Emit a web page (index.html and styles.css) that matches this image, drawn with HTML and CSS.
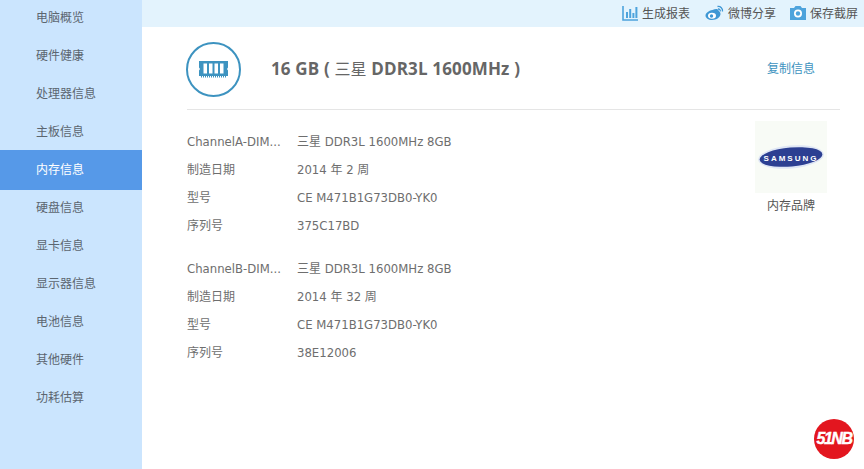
FILE: index.html
```html
<!doctype html>
<html>
  <head>
    <meta charset="utf-8">
    <title>内存信息</title>
    <link rel="stylesheet" href="styles.css">
  </head>
  <body>
    <div class="app">
      <ul class="side">
        <li>电脑概览</li>
        <li>硬件健康</li>
        <li>处理器信息</li>
        <li>主板信息</li>
        <li class="active">内存信息</li>
        <li>硬盘信息</li>
        <li>显卡信息</li>
        <li>显示器信息</li>
        <li>电池信息</li>
        <li>其他硬件</li>
        <li>功耗估算</li>
      </ul>

      <div class="main">
        <div class="top">
          <span class="tool">
            <svg width="16" height="16" viewBox="0 0 16 16"><path d="M1 1v14h15" fill="none" stroke="#4da3dc" stroke-width="1.6"/><path d="M4 7h2v6H4zM7.200 4h2v9h-2zM10.400 8h2v5h-2zM13.400 2h2v11h-2z" fill="#4da3dc"/></svg>
            生成报表
          </span>
          <span class="tool">
            <svg width="20" height="16" viewBox="0 0 19 16"><path d="M8 5c3-1.500 5.500-1.500 6 .5.300 1 2 1 2 3.500 0 3-4 6-8.500 6C4 15 1 13 1 10.500 1 8.500 4 5.500 8 5z" fill="#3f97d4"/><ellipse cx="7.500" cy="10.700" rx="4" ry="3" fill="#fff"/><circle cx="7" cy="11" r="1.700" fill="#3f97d4"/><path d="M13 1.500c3-.5 5.500 2 5 5M13.500 4c1.500-.2 2.500 1 2.300 2.300" fill="none" stroke="#3f97d4" stroke-width="1.300"/></svg>
            微博分享
          </span>
          <span class="tool">
            <svg width="16" height="15" viewBox="0 0 16 15"><path d="M0 3h4l1.500-2h5L12 3h4v12H0z" fill="#4da3dc"/><circle cx="8" cy="8.500" r="4" fill="#fff"/><circle cx="8" cy="8.500" r="2.200" fill="#4da3dc"/></svg>
            保存截屏
          </span>
        </div>

        <div class="content">
          <div class="head">
            <div class="ring">
              <svg width="29" height="17" viewBox="0 0 29 17"><path d="M0 0h29v6.500l-1 1.500 1 1.500V15H0V9.500L1 8 0 6.500z" fill="#3d93c0"/><path d="M4.500 2.500H8v10H4.500zM10 2.500h3.500v10H10zM15.500 2.500H19v10h-3.500zM21 2.500h3.500v10H21z" fill="#fff"/><path d="M2 15.500h25" stroke="#3d93c0" stroke-width="2" stroke-dasharray="1 1"/></svg>
            </div>
            <div class="title">16 GB ( <span class="cn">三星</span> DDR3L 1600MHz )</div>
            <a class="copy">复制信息</a>
          </div>

          <div class="body">
            <div class="specs">
              <div class="group">
                <div class="row"><span class="key">ChannelA-DIM...</span><span><span class="cn">三星</span> DDR3L 1600MHz 8GB</span></div>
                <div class="row"><span class="key cn">制造日期</span><span>2014 <span class="cn">年</span> 2 <span class="cn">周</span></span></div>
                <div class="row"><span class="key cn">型号</span><span>CE M471B1G73DB0-YK0</span></div>
                <div class="row"><span class="key cn">序列号</span><span>375C17BD</span></div>
              </div>
              <div class="group">
                <div class="row"><span class="key">ChannelB-DIM...</span><span><span class="cn">三星</span> DDR3L 1600MHz 8GB</span></div>
                <div class="row"><span class="key cn">制造日期</span><span>2014 <span class="cn">年</span> 32 <span class="cn">周</span></span></div>
                <div class="row"><span class="key cn">型号</span><span>CE M471B1G73DB0-YK0</span></div>
                <div class="row"><span class="key cn">序列号</span><span>38E12006</span></div>
              </div>
            </div>
            <div class="brand">
              <div class="logo">
                <svg width="66" height="28" viewBox="0 0 66 28">
                  <ellipse cx="33" cy="14" rx="33" ry="11.500" transform="rotate(-5 33 14)" fill="#dfe6f5"/>
                  <ellipse cx="33" cy="14" rx="31.500" ry="9.500" transform="rotate(-5 33 14)" fill="#2c3f92"/>
                  <text x="33" y="17.500" text-anchor="middle" class="logo-text">SAMSUNG</text>
                </svg>
              </div>
              <div class="brand-name">内存品牌</div>
            </div>
          </div>
        </div>
      </div>
    </div>

    <div class="badge">51NB</div>
  </body>
</html>
```

FILE: styles.css
```css
* {
  box-sizing: border-box;
}

html,
body {
  margin: 0;
  padding: 0;
  width: 100%;
  height: 100%;
  overflow: hidden;
  background: #fff;
}
body {
  font-family: "Noto Sans CJK SC", sans-serif;
  font-size: 12px;
  color: #666;
  line-height: 1;
}
.cn {
  font-family: "Noto Sans CJK SC", sans-serif;
  font-size: 12px;
}
.app {
  display: flex;
  height: 469px;
}
.side {
  width: 142px;
  margin: 0;
  padding: 0;
  list-style: none;
  background: #cbe5fe;
}
.side li {
  height: 38px;
  line-height: 34px;
  padding-left: 36px;
  color: #5c6670;
}
.side li.active {
  height: 40px;
  margin-top: -2px;
  line-height: 38px;
  background: #5699e8;
  color: #fff;
}
.main {
  flex: 1;
  display: flex;
  flex-direction: column;
}
.top {
  height: 27px;
  background: #e3f3fd;
  display: flex;
  justify-content: flex-end;
  align-items: center;
  gap: 14px;
  padding: 0 6px 2px 0;
  color: #555;
}
.tool {
  display: flex;
  align-items: center;
  gap: 4px;
}
.content {
  padding: 15px 24px 0 45px;
}
.head {
  display: flex;
  align-items: center;
  height: 68px;
  padding-bottom: 12px;
  border-bottom: 1px solid #e5e5e5;
}
.ring {
  width: 55px;
  height: 55px;
  margin-left: -1px;
  border: 2px solid #3d93c0;
  border-radius: 50%;
  display: flex;
  align-items: center;
  justify-content: center;
}
.title {
  margin: 0 0 3px 30px;
  font-family: "Open Sans", sans-serif;
  font-size: 17px;
  font-weight: bold;
  letter-spacing: 0.15px;
  color: #666;
  flex: 1;
}
.title .cn {
  font-size: 16px;
  font-weight: normal;
}
.copy {
  color: #3d93c0;
  margin: 0 25px 3px 0;
}
.body {
  display: flex;
  justify-content: space-between;
  padding-top: 11px;
}
.specs {
  padding-top: 6px;
  font-family: "DejaVu Sans", sans-serif;
  font-size: 11.7px;
}
.group {
  margin-bottom: 15px;
}
.row {
  display: flex;
  height: 28px;
  line-height: 28px;
  align-items: baseline;
  color: #6e6e6e;
}
.key {
  width: 110px;
}
.brand {
  width: 72px;
  margin-right: 13px;
}
.logo {
  height: 72px;
  background: #f8fbf6;
  display: flex;
  align-items: center;
  justify-content: center;
}
.logo-text {
  font-family: "Liberation Sans", sans-serif;
  font-size: 8px;
  font-weight: bold;
  letter-spacing: 2px;
  fill: #fff;
}
.brand-name {
  margin-top: 6px;
  text-align: center;
  color: #555;
}
.badge {
  position: absolute;
  left: 814px;
  top: 419px;
  width: 40px;
  height: 40px;
  border-radius: 50%;
  background: #e3161f;
  color: #fff;
  font-family: "Liberation Sans", sans-serif;
  font-size: 16px;
  font-weight: bold;
  font-style: italic;
  letter-spacing: -1.5px;
  -webkit-text-stroke: 0.4px #fff;
  display: flex;
  align-items: center;
  justify-content: center;
}
```
